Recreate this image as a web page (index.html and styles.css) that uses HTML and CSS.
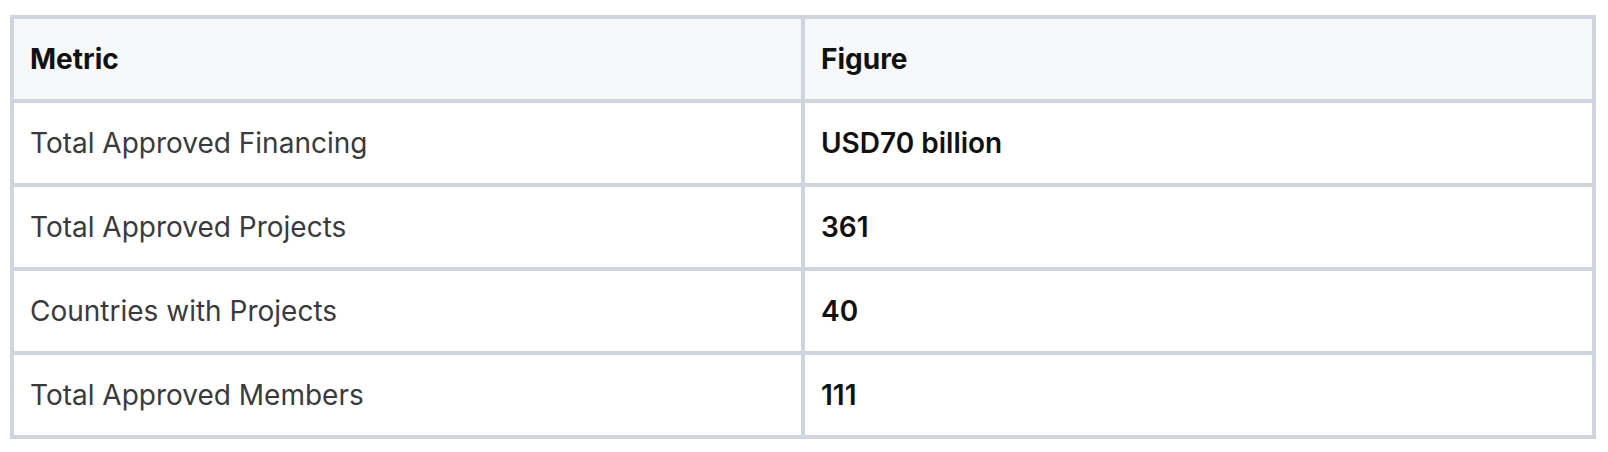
FILE: index.html
```html
<!DOCTYPE html>
<html lang="en">
<head>
<meta charset="utf-8">
<title>Metrics</title>
<link rel="stylesheet" href="styles.css">
</head>
<body>
<div class="wrap">
  <table class="metrics">
    <colgroup>
      <col class="col-metric">
      <col class="col-figure">
    </colgroup>
    <thead>
      <tr>
        <th>Metric</th>
        <th>Figure</th>
      </tr>
    </thead>
    <tbody>
      <tr>
        <td class="label">Total Approved Financing</td>
        <td class="value">USD70 billion</td>
      </tr>
      <tr>
        <td class="label">Total Approved Projects</td>
        <td class="value">361</td>
      </tr>
      <tr>
        <td class="label">Countries with Projects</td>
        <td class="value">40</td>
      </tr>
      <tr>
        <td class="label">Total Approved Members</td>
        <td class="value">111</td>
      </tr>
    </tbody>
  </table>
</div>
</body>
</html>
```

FILE: styles.css
```css
html, body {
  margin: 0;
  padding: 0;
  background: #ffffff;
}

body {
  font-family: Inter, "Noto Sans", "Liberation Sans", sans-serif;
}

.wrap {
  padding: 15px 12px 0 10px;
}

.metrics {
  width: 1586px;
  border-collapse: separate;
  border-spacing: 0;
  border: 4px solid #cfd5de;
  table-layout: fixed;
  font-size: 28px;
  line-height: 34px;
}

.col-metric {
  width: 791px;
}

.col-figure {
  width: 787px;
}

.metrics th,
.metrics td {
  padding: 23px 16px;
  text-align: left;
  vertical-align: middle;
  border-bottom: 4px solid #cfd5de;
}

.metrics tbody tr:last-child td {
  border-bottom: 0;
}

.metrics th:first-child,
.metrics td:first-child {
  border-right: 4px solid #cfd5de;
}

.metrics th {
  background: #f7f8fa;
  color: #111111;
  font-weight: 700;
}

.metrics td.label {
  color: #3a3a3c;
  font-weight: 400;
}

.metrics td.value {
  color: #111111;
  font-weight: 600;
}
```
